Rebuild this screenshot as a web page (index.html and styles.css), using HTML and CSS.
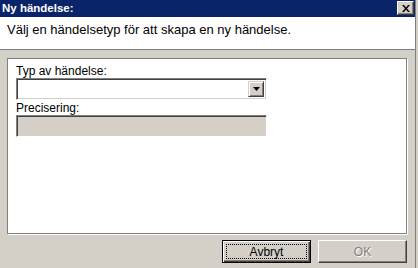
FILE: index.html
```html
<!DOCTYPE html>
<html lang="sv">
<head>
  <meta charset="UTF-8" />
  <meta name="viewport" content="width=device-width, initial-scale=1.0" />
  <title>Ny händelse</title>
  <link rel="stylesheet" href="styles.css">
</head>
<body>
  <div class="dialog">
    <!-- title bar -->
    <div class="titlebar">
      <span class="title">Ny händelse:</span>
      <button class="close" type="button" aria-label="Stäng">
        <svg width="8" height="7" viewBox="0 0 8 7">
          <path d="M0 0h2l2 2.5L6 0h2L5 3.5 8 7H6L4 4.5 2 7H0l3-3.5z" fill="#000"/>
        </svg>
      </button>
    </div>

    <div class="header">Välj en händelsetyp för att skapa en ny händelse.</div>

    <div class="content">
      <div class="panel">
        <label class="field-label">Typ av händelse:</label>
        <div class="combo">
          <span class="combo-value"></span>
          <span class="combo-btn">
            <svg width="7" height="4" viewBox="0 0 7 4"><path d="M0 0h7L3.5 4z" fill="#000"/></svg>
          </span>
        </div>
        <label class="field-label">Precisering:</label>
        <div class="textbox disabled"></div>
      </div>

      <div class="buttons">
        <button class="btn default" type="button"><span class="focus">Avbryt</span></button>
        <button class="btn" type="button" disabled>OK</button>
      </div>
    </div>
  </div>
</body>
</html>
```

FILE: styles.css
```css
body {
  margin: 0;
  width: 418px;
  height: 268px;
  background: #d4d0c8;
  font-family: "Liberation Sans", Arial, sans-serif;
  font-size: 12px;
  color: #000;
  overflow: hidden;
}
.dialog {
  width: 415px;
  height: 268px;
  border-right: 1px solid #808080;
  display: flex;
  flex-direction: column;
}
.titlebar {
  height: 17px;
  background: #0a246a;
  display: flex;
  align-items: flex-start;
  justify-content: space-between;
}
.title {
  color: #fff;
  font-weight: bold;
  font-size: 11.5px;
  padding: 2px 0 0 2px;
  line-height: 13px;
}
.close {
  width: 17px;
  height: 14px;
  margin: 1px 1px 0 0;
  padding: 0;
  background: #d4d0c8;
  border: 1px solid;
  border-color: #fff #404040 #404040 #fff;
  box-shadow: inset -1px -1px 0 #808080;
  display: flex;
  align-items: center;
  justify-content: center;
}
.header {
  height: 33px;
  background: #fff;
  border-bottom: 1px solid #808080;
  padding: 5px 0 0 7px;
  box-sizing: border-box;
  line-height: 15px;
  font-size: 13px;
}
.content {
  flex: 1;
  padding: 8px 8px 0 7px;
  display: flex;
  flex-direction: column;
}
.panel {
  height: 176px;
  background: #fff;
  border: 1px solid #808080;
  box-shadow: 1px 1px 0 #fff;
  box-sizing: border-box;
  padding: 5px 8px 0 8px;
  display: flex;
  flex-direction: column;
}
.field-label {
  line-height: 14px;
  height: 14px;
  display: block;
}
.combo, .textbox {
  width: 251px;
  height: 22px;
  box-sizing: border-box;
  border: 1px solid;
  border-color: #808080 #fff #fff #808080;
  box-shadow: inset 1px 1px 0 #404040, inset -1px -1px 0 #d4d0c8;
  background: #fff;
  margin-bottom: 1px;
}
.combo {
  display: flex;
  justify-content: flex-end;
  padding: 2px;
}
.combo-btn {
  width: 16px;
  height: 16px;
  box-sizing: border-box;
  background: #d4d0c8;
  border: 1px solid;
  border-color: #d4d0c8 #404040 #404040 #d4d0c8;
  box-shadow: inset 1px 1px 0 #fff, inset -1px -1px 0 #808080;
  display: flex;
  align-items: center;
  justify-content: center;
}
.textbox.disabled {
  background: #d4d0c8;
}
.buttons {
  display: flex;
  justify-content: flex-end;
  gap: 7px;
  padding: 6px 0 0 0;
}
.btn {
  width: 89px;
  height: 23px;
  padding: 0;
  font: inherit;
  color: #000;
  background: #d4d0c8;
  border: 1px solid;
  border-color: #fff #404040 #404040 #fff;
  box-shadow: inset -1px -1px 0 #808080;
  display: flex;
  align-items: center;
  justify-content: center;
}
.btn.default {
  border: 1px solid #000;
  box-shadow: inset 1px 1px 0 #fff, inset -1px -1px 0 #404040, inset -2px -2px 0 #808080;
  padding: 3px;
}
.focus {
  flex: 1;
  align-self: stretch;
  border: 1px dotted #000;
  display: flex;
  align-items: center;
  justify-content: center;
}
.btn:disabled {
  color: #808080;
  text-shadow: 1px 1px 0 #fff;
}
```
